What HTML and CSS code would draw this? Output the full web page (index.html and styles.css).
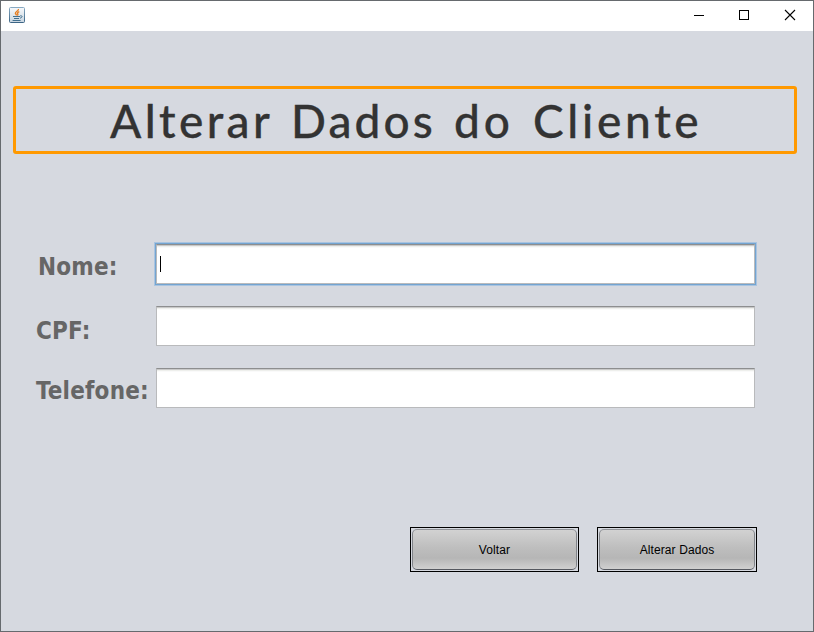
FILE: index.html
```html
<!DOCTYPE html>
<html lang="pt-BR">
<head>
<meta charset="utf-8">
<title>Alterar Dados do Cliente</title>
<link rel="stylesheet" href="styles.css">
</head>
<body>
<div class="window">
  <header class="titlebar">
    <svg class="app-icon" width="16" height="16" viewBox="0 0 16 16">
      <defs><linearGradient id="tile" x2="0" y2="1"><stop stop-color="#87a9c2"/><stop offset="1" stop-color="#3c6585"/></linearGradient>
      <linearGradient id="paper" x2="0" y2="1"><stop stop-color="#f7f9fb"/><stop offset="1" stop-color="#c8d5e0"/></linearGradient></defs>
      <rect x=".5" y=".5" width="15" height="15" rx="1" fill="url(#paper)" stroke="url(#tile)"/>
      <path d="M9.4 2C10 4 6 4.4 6.4 6.3 6.6 7.2 7.6 7.6 7.5 8.5M10.3 4.6C8.2 5.6 8.2 6.2 8.8 7 9 7.4 8.8 8 8.4 8.5" fill="none" stroke="#e67e22" stroke-width="1.4"/>
      <path d="M4 9.5h7M5 11.5h5M3.6 13.5h8M11.2 8.8C14 8.4 13.4 10.7 10.9 11.2" fill="none" stroke="#42708f"/>
    </svg>
    <svg class="controls" width="104" height="12" viewBox="0 0 104 12" fill="none" stroke="#000">
      <path d="M1 6.5h10"/><rect x="46.5" y="1.5" width="9" height="9"/><path d="M92 1l10 10M102 1l-10 10" stroke-width="1.1"/>
    </svg>
  </header>
  <main>
    <h1 class="heading"><span class="w1">Alterar</span><span class="w2">Dados</span><span class="w3">do</span><span class="w4">Cliente</span></h1>
    <form class="form">
      <div class="row"><label class="label-name">Nome:</label><div class="field focused"><span class="caret"></span></div></div>
      <div class="row"><label class="label-cpf">CPF:</label><div class="field"></div></div>
      <div class="row"><label class="label-phone">Telefone:</label><div class="field"></div></div>
    </form>
    <div class="actions">
      <div class="button back"><button type="button">Voltar</button></div>
      <div class="button save"><button type="button">Alterar Dados</button></div>
    </div>
  </main>
</div>
</body>
</html>
```
FILE: styles.css
```css
* { box-sizing: border-box; }
body { margin: 0; }
.window {
  width: 814px; height: 632px;
  border: 1px solid #666a6e;
  background: #d6d9e0;
}
.titlebar {
  height: 30px; background: #fff;
  display: flex; justify-content: space-between; align-items: center;
  padding: 0 16px 2px 8px;
}
.heading {
  margin: 55px 16px 0 12px; height: 68px;
  border: 3px solid #ff9900; border-radius: 3px;
  display: flex; padding-left: 94px;
  font: 500 46px/64px Lato, sans-serif;
  -webkit-text-stroke: 0.3px #333;
  color: #333; white-space: nowrap;
}
.w1 { width: 181px; letter-spacing: 3.4px; }
.w2 { width: 163px; letter-spacing: 3.1px; }
.w3 { width: 79px; letter-spacing: 4px; }
.w4 { letter-spacing: 3.7px; }
.form {
  margin: 90px 0 0 35px;
  display: grid; gap: 22px;
}
.row { display: flex; height: 40px; }
label {
  width: 120px; flex: none;
  font: bold 24px/40px "DejaVu Sans Condensed", "DejaVu Sans", sans-serif;
  font-stretch: condensed; letter-spacing: 0.2px;
  color: #666; white-space: nowrap;
}
.label-name { padding: 3px 0 0 2px; }
.label-cpf { padding-top: 5px; }
.label-phone { padding-top: 3px; }
.field {
  width: 599px; height: 40px;
  border: 1px solid #b9babc; border-top-color: #8d8e8f;
  background: linear-gradient(#c9c9c9 0 1px, #eeefec 1px 2px, #fafafa 2px 3px, #fff 3px);
}
.focused { box-shadow: 0 0 0 1px #73a4d1, 0 0 0 2px #a9c4e0; }
.caret {
  display: block; width: 1px; height: 16px;
  margin: 11px 0 0 3px; background: #000;
}
.actions {
  margin: 119px 56px 0 0;
  display: flex; justify-content: flex-end; gap: 18px;
}
.button { height: 45px; border: 1px solid #000; padding: 1px; }
.back { width: 169px; }
.save { width: 160px; }
button {
  display: block; width: 100%; height: 41px; padding: 0;
  border: 1px solid; border-color: #929499 #808388 #55585f;
  border-radius: 5px;
  background: linear-gradient(#d2d2d2, #bebebe 45%, #b6b6b6 72%, #d0d0d0);
  font: 12px "Liberation Sans", Arial, sans-serif; color: #000;
  letter-spacing: 0.1px;
}
```
